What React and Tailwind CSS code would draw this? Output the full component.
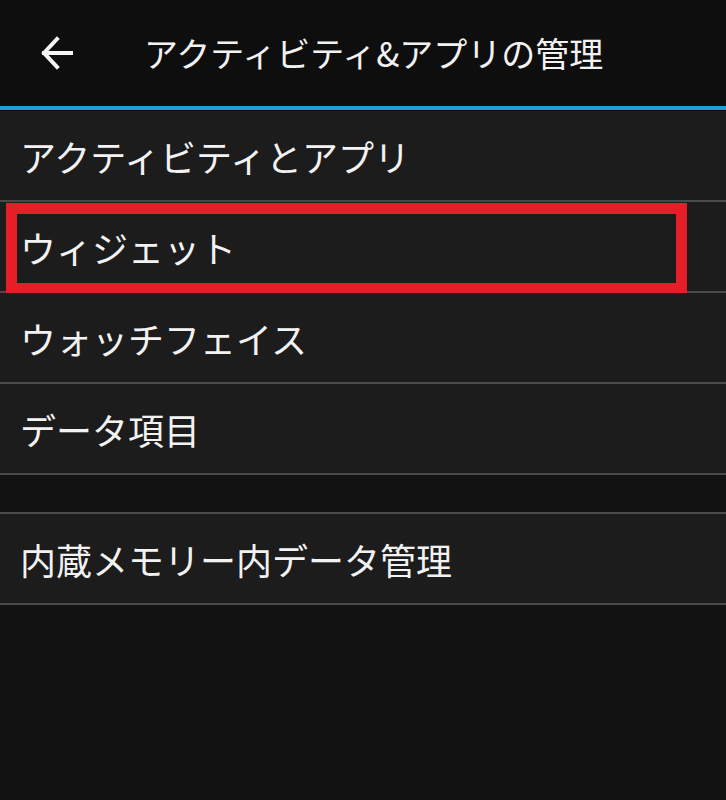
const items = ["アクティビティとアプリ", "ウィジェット", "ウォッチフェイス", "データ項目"];

function Row({ label, boxed, top }) {
  return (
    <div
      className={`relative flex h-[91px] items-center border-b-2 border-[#4a4a4a] bg-[#1c1c1c] pl-[20px] ${
        top ? "h-[93px] border-t-2" : ""
      }`}
    >
      <span className="text-[36px] leading-none text-[#f2f2f2]">{label}</span>
      {boxed && (
        <div className="pointer-events-none absolute left-[6px] top-px h-[91px] w-[681px] shadow-[inset_0_0_0_11px_#e61e28]" />
      )}
    </div>
  );
}

export default function App() {
  return (
    <div
      className="flex h-[800px] w-[726px] flex-col bg-[#121212]"
      style={{ fontFamily: '"Noto Sans CJK JP", "Noto Sans", sans-serif' }}
    >
      <header className="flex h-[106px] items-center bg-[#0e0e0e]">
        <svg
          className="ml-[40px]"
          width="34"
          height="34"
          viewBox="0 0 34 34"
          fill="none"
          stroke="#f5f5f5"
          strokeWidth="4"
          strokeLinecap="square"
        >
          <path d="M4 17H31" />
          <path d="M17 3L4 17L17 31" strokeLinejoin="miter" />
        </svg>
        <h1 className="ml-[70px] text-[34px] font-normal leading-none text-[#f2f2f2]">
          アクティビティ&amp;アプリの管理
        </h1>
      </header>
      <div className="h-[4px] bg-[#1e9fdc]" />
      <div className="h-px bg-[#0a0a0a]" />
      <div className="bg-[#1c1c1c]">
        {items.map((label, i) => (
          <Row key={label} label={label} boxed={i === 1} />
        ))}
      </div>
      <div className="h-[37px]" />
      <Row label="内蔵メモリー内データ管理" top />
    </div>
  );
}
